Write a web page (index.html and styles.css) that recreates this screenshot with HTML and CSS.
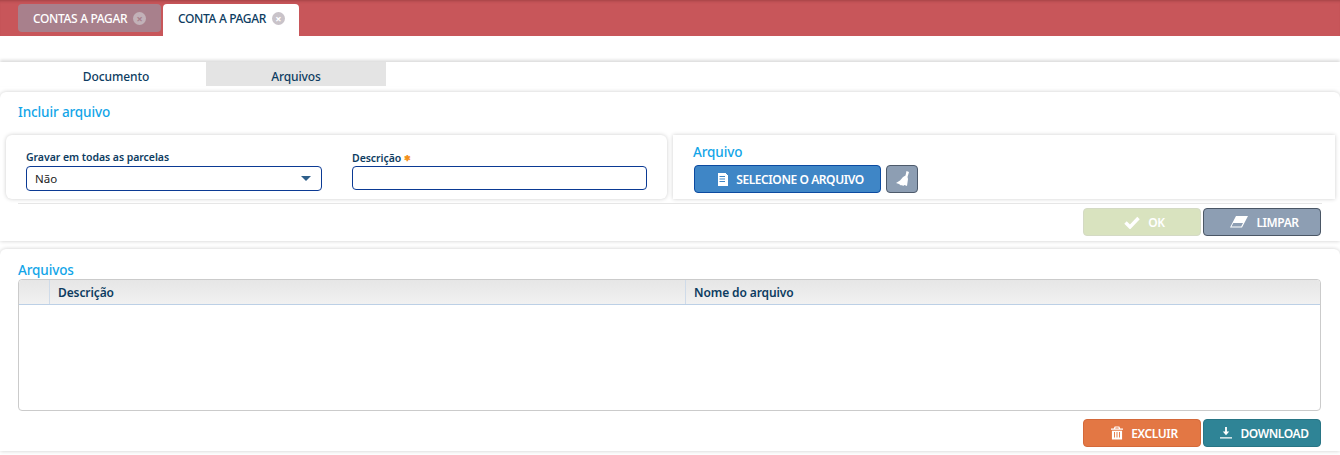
FILE: index.html
```html
<!DOCTYPE html>
<html lang="pt">
<head>
<meta charset="utf-8">
<title>Conta a pagar</title>
<link rel="stylesheet" href="styles.css">
</head>
<body>
<header class="topbar">
  <div class="toptab">CONTAS A PAGAR <span class="close">×</span></div>
  <div class="toptab active">CONTA A PAGAR <span class="close">×</span></div>
</header>
<nav class="subtabs">
  <div class="subtab">Documento</div>
  <div class="subtab selected">Arquivos</div>
</nav>
<section class="panel upload">
  <h2 class="title">Incluir arquivo</h2>
  <div class="cards">
    <div class="card form">
      <div class="field f1">
        <label class="lbl">Gravar em todas as parcelas</label>
        <div class="input select"><span>Não</span><i class="caret"></i></div>
      </div>
      <div class="field f2">
        <label class="lbl">Descrição <span class="req">✱</span></label>
        <div class="input"></div>
      </div>
    </div>
    <div class="card file">
      <h2 class="title small">Arquivo</h2>
      <div class="filerow">
        <div class="btn primary">
          <svg viewBox="0 0 11 13" width="11" height="13"><path fill="#fff" fill-rule="evenodd" d="M1 0h8v1h1v1h1v11H1zM2.500 3v1H8V3zM2.500 5.500v1H8v-1zM2.500 8v1H8V8z"/></svg>
          SELECIONE O ARQUIVO
        </div>
        <div class="btn broom">
          <svg viewBox="0 0 13 16" width="13" height="16"><path fill="#fff" d="M10.500 0L13 1l-1.500 5 .5 2-1 7-2.500-1-1.500 1-1-1-1 .5-2-1.500-3-1 4-2.500 3-3.500 2.500-1.500z"/></svg>
        </div>
      </div>
    </div>
  </div>
  <div class="actions rule">
    <div class="btn act ok">
      <svg viewBox="0 0 16 13" width="16" height="13"><path fill="none" stroke="#fff" stroke-width="3.400" d="M1.500 6.500l4.500 4.500 8.500-9"/></svg>
      OK
    </div>
    <div class="btn act clear">
      <svg viewBox="0 0 18 12" width="18" height="12"><path fill="#fff" fill-rule="evenodd" d="M6 0h12l-6 11.500H0zM3.300 7L1.500 10.500h9.700L13 7z"/></svg>
      LIMPAR
    </div>
  </div>
</section>
<section class="panel list">
  <h2 class="title tight">Arquivos</h2>
  <div class="table">
    <div class="thead">
      <div class="th c0"></div>
      <div class="th c1">Descrição</div>
      <div class="th c2">Nome do arquivo</div>
    </div>
    <div class="tbody"></div>
  </div>
  <div class="actions">
    <div class="btn act danger">
      <svg viewBox="0 0 13 14" width="12" height="14"><path fill="#fff" fill-rule="evenodd" d="M4 0h5l1 2h3v1.500H0V2h3zM5 1L4.500 2h4L8 1zM1 4.500h11V14H1zM3.300 6v6h1V6zM6 6v6h1V6zM8.700 6v6h1V6z"/></svg>
      EXCLUIR
    </div>
    <div class="btn act teal">
      <svg viewBox="0 0 13 13" width="12" height="12"><path fill="#fff" d="M5.500 0h2v5H10L6.500 9 3 5h2.500zM0 11h13v1.500H0z"/></svg>
      DOWNLOAD
    </div>
  </div>
</section>
</body>
</html>
```
FILE: styles.css
```css
* { box-sizing: border-box; }
html, body { margin: 0; padding: 0; }
body {
  width: 1340px;
  height: 455px;
  overflow: hidden;
  background: #fff;
  font-family: "Noto Sans", "Open Sans", sans-serif;
  color: #0d3c61;
}
.topbar {
  height: 36px;
  background: #c8565a;
  box-shadow: inset 0 3px 3px -2px rgba(90, 30, 30, .35);
  display: flex;
  align-items: flex-start;
  padding: 4px 0 0 18px;
  gap: 2px;
}
.toptab {
  height: 28px;
  width: 143px;
  padding-left: 15px;
  display: flex;
  align-items: center;
  gap: 6px;
  background: #a8808c;
  color: #fff;
  border-radius: 4px;
  font-size: 12px;
  font-weight: 500;
  letter-spacing: -.35px;
  white-space: nowrap;
}
.toptab.active {
  height: 32px;
  width: 136px;
  background: #fff;
  color: #0d3c61;
  border-radius: 4px 4px 0 0;
  padding-bottom: 4px;
}
.close {
  width: 13px;
  height: 13px;
  border-radius: 50%;
  background: #c9c3c9;
  color: #fff;
  font-size: 11px;
  line-height: 13px;
  text-align: center;
  letter-spacing: 0;
  font-weight: 700;
}
.toptab:first-child .close { background: #c2b1b8; color: #a8808c; }
.subtabs {
  margin-top: 26px;
  height: 24px;
  display: flex;
  box-shadow: 0 -2px 3px rgba(0, 0, 0, .14);
  padding-left: 26px;
}
.subtab {
  width: 180px;
  height: 24px;
  text-align: center;
  font-size: 12px;
  font-weight: 500;
  line-height: 29px;
  letter-spacing: -.1px;
}
.subtab.selected { background: #e4e4e4; }
.panel {
  border-radius: 6px 6px 0 0;
  box-shadow: 0 0 4px rgba(0, 0, 0, .2);
  background: #fff;
}
.upload { margin-top: 6px; height: 149px; }
.list { margin-top: 8px; height: 202px; padding: 0 19px 0 18px; }
.title {
  margin: 0;
  font-weight: 500;
  font-size: 13.500px;
  color: #12a5e8;
  letter-spacing: -.12px;
}
.upload > .title { padding: 11px 0 0 18px; height: 43px; line-height: 18px; }
.title.tight { height: 30px; padding-top: 13px; line-height: 17px; }
.cards { display: flex; gap: 6px; padding: 0 5px 0 6px; height: 64px; }
.card {
  background: #fff;
  border-radius: 6px;
  box-shadow: 0 0 4px rgba(0, 0, 0, .2);
}
.form { width: 661px; display: flex; padding: 15px 0 0 20px; }
.file { flex: 1; border-radius: 0; padding: 9px 0 0 20px; }
.field { display: flex; flex-direction: column; }
.f1 { width: 296px; margin-right: 30px; }
.f2 { width: 295px; }
.lbl {
  font-size: 10.500px;
  font-weight: 600;
  height: 16px;
  line-height: 15px;
  color: #0d3c61;
  letter-spacing: -.05px;
}
.req { color: #f39019; font-size: 8px; vertical-align: 1px; }
.input {
  height: 25px;
  border: 1px solid #0b3a94;
  border-radius: 4px;
  font-size: 11.500px;
  color: #222;
  display: flex;
  align-items: center;
  padding: 0 9px 0 8px;
}
.f2 .input { height: 24px; }
.select { justify-content: space-between; }
.caret {
  width: 0; height: 0;
  border-left: 5px solid transparent;
  border-right: 5px solid transparent;
  border-top: 5px solid #2e5f8a;
  margin-right: 1px;
}
.file .title { height: 21px; line-height: 17px; }
.filerow { display: flex; gap: 5px; padding-left: 1px; }
.btn {
  display: flex;
  align-items: center;
  justify-content: center;
  gap: 7px;
  border-radius: 4px;
  color: #fff;
  font-size: 12px;
  font-weight: 600;
  letter-spacing: -.42px;
  white-space: nowrap;
}
.primary {
  width: 187px;
  height: 28px;
  background: #3f86c6;
  border: 1px solid #0b4aa0;
  padding-left: 6px;
  gap: 8px;
}
.broom {
  width: 32px;
  height: 28px;
  background: #8d9eb3;
  border: 1px solid #4d5a6b;
}
.actions {
  display: flex;
  justify-content: flex-end;
  gap: 2px;
  padding-right: 19px;
}
.upload .actions.rule {
  margin: 4px 18px 0;
  padding: 4px 1px 0 0;
  border-top: 1px solid #e6e6e6;
}
.list .actions { padding: 8px 0 0; }
.act { width: 118px; height: 28px; padding-left: 5px; }
.ok { background: #d9e3bf; border: 1px solid #d4dac4; }
.clear { background: #8d9eb3; border: 1px solid #4a5665; }
.danger { background: #e37744; border: 1px solid #d4693a; }
.teal { background: #2f8496; border: 1px solid #287585; }
.act svg { margin-right: 1px; }
.table {
  height: 132px;
  border: 1px solid #cbcbcb;
  border-radius: 4px;
  display: flex;
  flex-direction: column;
}
.thead {
  height: 25px;
  display: flex;
  background: linear-gradient(#e6e6e6, #f1f1f1);
  border-bottom: 1px solid #bcd0e6;
  border-radius: 4px 4px 0 0;
}
.th {
  font-size: 12px;
  font-weight: 600;
  line-height: 26px;
  padding-left: 8px;
  border-right: 1px solid #cfdbe9;
  letter-spacing: -.1px;
}
.c0 { width: 31px; }
.c1 { width: 636px; }
.c2 { flex: 1; border-right: 0; }
.tbody { flex: 1; }
```
